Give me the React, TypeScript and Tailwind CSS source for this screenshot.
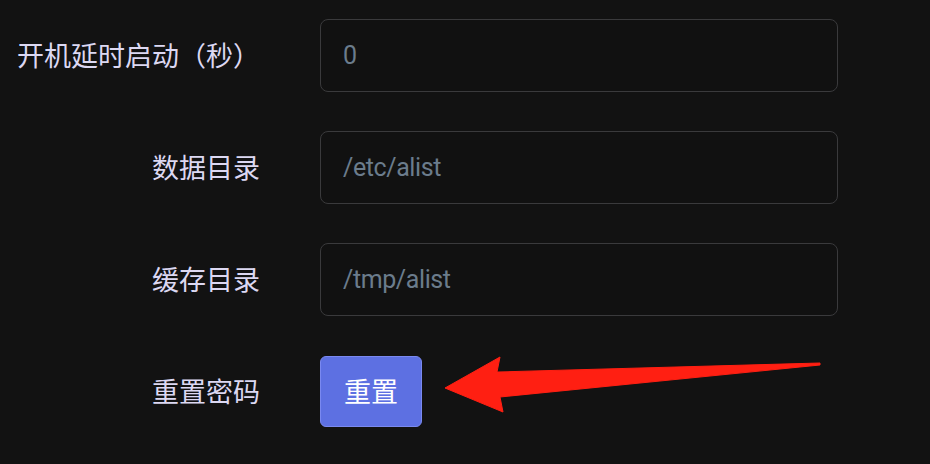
import React from 'react';

const labelFont = { fontFamily: '"Noto Sans CJK SC", "Noto Sans", sans-serif' };

function Field({ label, value }: { label: string; value: string }) {
  return (
    <div className="flex items-center h-[73px]">
      <div className="w-[260px] shrink-0 text-right text-[27px] text-[#dcd8f2]" style={labelFont}>
        {label}
      </div>
      <input
        readOnly
        placeholder={value}
        className="ml-[60px] w-[518px] h-[73px] rounded-lg border border-[#3a3a3c] bg-[#111111] pl-[22px] pr-4 text-[25px] tracking-[-0.4px] text-[#6b7c8c] placeholder:text-[#6b7c8c] outline-none font-['Roboto',sans-serif]"
      />
    </div>
  );
}

export default function App() {
  return (
    <div className="relative w-[930px] h-[464px] overflow-hidden bg-[#121212]">
      <div className="flex flex-col gap-[39px] pt-[19px]">
        <Field label="开机延时启动（秒）" value="0" />
        <Field label="数据目录" value="/etc/alist" />
        <Field label="缓存目录" value="/tmp/alist" />
        <div className="flex items-center h-[73px]">
          <div className="w-[260px] shrink-0 text-right text-[27px] text-[#dcd8f2]" style={labelFont}>
            重置密码
          </div>
          <button
            className="ml-[60px] w-[102px] h-[71px] rounded-md border border-[#7a89f0] bg-[#5d70e2] text-[27px] text-white"
            style={labelFont}
          >
            重置
          </button>
        </div>
      </div>
      {/* red annotation arrow */}
      <svg className="absolute left-0 top-0" width="930" height="464" viewBox="0 0 930 464">
        <polygon
          points="445,388 500,357 497,372 820,363 820,365 500,397 503,412"
          fill="#ff1f12"
          stroke="#ff1f12"
          strokeWidth="1"
          strokeLinejoin="round"
        />
      </svg>
    </div>
  );
}
